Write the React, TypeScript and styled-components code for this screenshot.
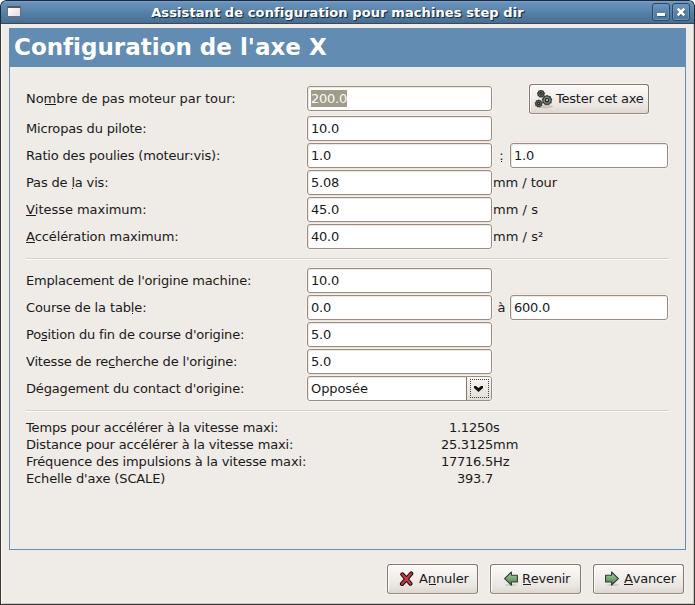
import React from 'react';
import styled, { createGlobalStyle } from 'styled-components';

const GlobalStyle = createGlobalStyle`
  * { box-sizing: border-box; }
  body {
    margin: 0;
    background: #fff;
    color: #1a1a1a;
    font: 13px/17px "DejaVu Sans", sans-serif;
  }
`;

const Window = styled.div`
  display: flex;
  flex-direction: column;
  width: 695px;
  height: 605px;
  overflow: hidden;
  border-radius: 6px 6px 0 0;
  background: #efebe7;
`;

const TitleBar = styled.header`
  display: flex;
  align-items: flex-start;
  flex: none;
  height: 24px;
  padding: 2px 4px 0 6px;
  border: 1px solid #1c2a38;
  border-bottom-color: #364a5e;
  border-radius: 6px 6px 0 0;
  background: linear-gradient(#7da3cb 0, #6790ba 2px, #5f88b0 8px, #5480a8 12px, #4b6f94 21px, #48698b);
`;

const WindowIcon = styled.span`
  width: 14px;
  height: 11px;
  margin-top: 3px;
  border: 1px solid #6f7072;
  border-top: 2px solid #55585c;
  background: linear-gradient(135deg, #fff, #dcdcdc);
`;

const WindowTitle = styled.h1`
  flex: 1;
  margin: 1px 0 0;
  padding-left: 2px;
  color: #fff;
  font-size: 13px;
  line-height: 17px;
  letter-spacing: 0.1px;
  text-align: center;
  text-shadow: 1px 1px 1px #1d2f42, 1px 1px 0 #2c435b;
`;

const WindowControls = styled.div`
  display: flex;
  gap: 2px;
`;

const ControlButton = styled.button`
  display: flex;
  width: 18px;
  height: 18px;
  padding: 0;
  border: 1px solid #30485f;
  border-radius: 3px;
  background: linear-gradient(#6f98c2, #5882aa 50%, #4e7499);
  box-shadow: inset 0 0 0 1px #6a93bc;
`;

const Body = styled.main`
  display: flex;
  flex: 1;
  flex-direction: column;
  padding: 4px 8px 0;
  border: 1px solid #3a3536;
  border-top: 0;
  box-shadow: inset 1px 0 0 #fbf9f7, inset -1px -1px 0 #cdc6c0;
`;

const Page = styled.section`
  width: 677px;
  height: 522px;
  border: 1px solid #648db4;
`;

const PageHeader = styled.h2`
  height: 38px;
  margin: 0;
  padding: 5px 0 0 4px;
  background: #628cb2;
  color: #fff;
  font-size: 23px;
  line-height: 27px;
  letter-spacing: 0.01px;
`;

const Content = styled.div`
  display: flex;
  flex-direction: column;
  padding: 17px 16px 0;
`;

const Group = styled.div`
  display: flex;
  flex-direction: column;
  gap: 2px;
`;

const Row = styled.div<{ $tall?: boolean }>`
  display: grid;
  grid-template-columns: 281px 185px 18px 158px;
  align-items: start;
  height: ${p => (p.$tall ? 30 : 25)}px;
  padding-top: ${p => (p.$tall ? 2 : 0)}px;
`;

const Text = styled.span<{ $track?: number }>`
  white-space: pre;
  letter-spacing: ${p => p.$track ?? 0}px;
`;

const Label = styled(Text)`
  padding-top: 4px;
`;

const Between = styled.span`
  padding: 4px 0 0 1px;
  text-align: center;
`;

const Unit = styled(Text)`
  grid-column: 3 / 5;
  padding: 4px 0 0 1px;
`;

const Mnemonic = styled.span<{ $from?: number; $width: number }>`
  position: relative;
  &::after {
    content: "";
    position: absolute;
    top: 13px;
    left: ${p => p.$from ?? 1}px;
    width: ${p => p.$width}px;
    height: 1px;
    background: #1a1a1a;
  }
`;

const Entry = styled.div`
  display: flex;
  height: 25px;
  padding: 3px;
  border: 1px solid #9b8c7f;
  border-radius: 3px;
  background: #fff;
  box-shadow: inset 1px 1px 0 #eee8e2, 0 0 0 1px #f5f1ee, 0 -1px 0 1px #eae4de;
  letter-spacing: -0.24px;
`;

const Selection = styled.span`
  height: 17px;
  width: 36px;
  background: #a09c8b;
  color: #fbfaf6;
`;

const Combo = styled(Entry)`
  padding-right: 0;
  padding-top: 0;
  padding-bottom: 0;
  justify-content: space-between;
  letter-spacing: -0.08px;
`;

const ComboValue = styled.span`
  padding-top: 3px;
`;

const ComboButton = styled.span`
  display: flex;
  width: 25px;
  height: 23px;
  padding: 2px 2px 2px 3px;
  border-left: 1px solid #857668;
  border-radius: 0 2px 2px 0;
  background: linear-gradient(#f8f6f4, #e3ddd7);
`;

const FocusRing = styled.span`
  display: flex;
  align-items: center;
  justify-content: center;
  width: 19px;
  height: 19px;
  padding: 0 2px 1px 0;
  border: 1px dotted #443f3a;
`;

const Separator = styled.hr`
  width: 643px;
  height: 2px;
  margin: 9px 0 8px;
  border: 0;
  border-top: 1px solid #d9d0cb;
  background: #fffdfc;
`;

const Summary = styled.div`
  display: grid;
  grid-template-columns: 281px 186px 1fr;
  margin-top: -1px;
`;

const Amount = styled(Text)`
  text-align: right;
`;

const PushButton = styled.button<{ $width: number; $inset: number; $gap?: number }>`
  display: flex;
  gap: ${p => p.$gap ?? 4}px;
  width: ${p => p.$width}px;
  height: 30px;
  padding: 5px 0 0 ${p => p.$inset}px;
  border: 1px solid #86776a;
  border-bottom-color: #9a8b7f;
  border-radius: 3px;
  background: linear-gradient(#fbfaf9, #f1eeeb 45%, #e9e5e0 75%, #ded7d0);
  box-shadow: inset 1px 1px 0 #fff, 0 0 0 1px #f6f3f0;
  color: #1a1a1a;
  font: inherit;
  svg { flex: none; }
`;

const TestButton = styled(PushButton)`
  grid-column: 3 / 5;
  margin: -2px 0 0 37px;
`;

const Footer = styled.footer`
  display: flex;
  justify-content: flex-end;
  gap: 12px;
  padding: 14px 2px 0 0;
`;

const spokes = [0, 40, 80, 120, 160, 200, 240, 280, 320];

const Gear = ({ x, y, r }: { x: number; y: number; r: number }) => (
  <g transform={`translate(${x} ${y})`}>
    {spokes.map(a => (
      <rect key={a} x={-0.8} y={-r - 1} width="1.6" height="2" fill="#3c3e3a" transform={`rotate(${a})`} />
    ))}
    <circle r={r} fill="#80847e" stroke="#3a3c38" strokeWidth="1.2" />
    <circle r={r * 0.4} fill="#b9bbb6" stroke="#1c1e1b" strokeWidth="1.1" />
  </g>
);

const GearsIcon = () => (
  <svg width="20" height="20" viewBox="0 0 20 20">
    <ellipse cx="11" cy="16.6" rx="8" ry="1.8" fill="#000" opacity=".13" />
    <Gear x={13} y={10.2} r={4.2} />
    <Gear x={7} y={3.8} r={2.9} />
    <Gear x={4.7} y={13.5} r={2.9} />
  </svg>
);

const CancelIcon = () => (
  <svg width="16" height="16" viewBox="0 0 16 16">
    <g fill="none" strokeLinecap="round" strokeLinejoin="round">
      <path d="M3.4 4.4L11.4 13.6M12.2 3.6L3 14" stroke="#1d0506" strokeWidth="4.2" />
      <path d="M3.4 4.4L11.4 13.6M12.2 3.6L3 14" stroke="#c33a45" strokeWidth="2.3" />
    </g>
  </svg>
);

const ArrowIcon = ({ back }: { back?: boolean }) => (
  <svg width="16" height="16" viewBox="0 0 16 16">
    <defs>
      <linearGradient id={back ? 'leaf-back' : 'leaf-next'} x1="0" y1="0" x2="0" y2="1">
        <stop offset="0" stopColor="#b5d0ae" />
        <stop offset=".5" stopColor="#7ba675" />
        <stop offset="1" stopColor="#437644" />
      </linearGradient>
    </defs>
    <ellipse cx="9" cy="15" rx="6" ry="1" fill="#000" opacity=".12" />
    <path
      transform={back ? 'translate(17 0) scale(-1 1)' : undefined}
      d="M1.6 5.2H7.6V2L14.4 8.6L7.6 15.2V12H1.6Z"
      fill={back ? 'url(#leaf-back)' : 'url(#leaf-next)'}
      stroke="#2d3f32"
      strokeWidth="1.1"
      strokeLinejoin="round"
    />
  </svg>
);

const MinimizeGlyph = () => (
  <svg width="16" height="16" viewBox="0 0 16 16">
    <path d="M5 10H13V13H5Z" fill="#1f3347" opacity=".5" />
    <path d="M4 9H12V12H4Z" fill="#fff" />
  </svg>
);

const CloseGlyph = () => (
  <svg width="16" height="16" viewBox="0 0 16 16" fill="none">
    <path d="M5.7 5.7L11.6 11.6M11.6 5.7L5.7 11.6" stroke="#1f3347" strokeWidth="3" opacity=".5" />
    <path d="M4.7 4.7L11.3 11.3M11.3 4.7L4.7 11.3" stroke="#fff" strokeWidth="2.6" />
  </svg>
);

const totals = [
  { label: 'Temps pour accélérer à la vitesse maxi:', track: -0.15, value: '1.1250', unit: 's' },
  { label: 'Distance pour accélérer à la vitesse maxi:', track: -0.15, value: '25.3125', unit: 'mm' },
  { label: 'Fréquence des impulsions à la vitesse maxi:', track: -0.155, value: '17716.5', unit: 'Hz' },
  { label: "Echelle d'axe (SCALE)", track: -0.13, value: '393.7', unit: '' },
];

export default function App() {
  return (
    <Window>
      <GlobalStyle />
      <TitleBar>
        <WindowIcon />
        <WindowTitle>Assistant de configuration pour machines step dir</WindowTitle>
        <WindowControls>
          <ControlButton aria-label="Réduire"><MinimizeGlyph /></ControlButton>
          <ControlButton aria-label="Fermer"><CloseGlyph /></ControlButton>
        </WindowControls>
      </TitleBar>
      <Body>
        <Page>
          <PageHeader>Configuration de l'axe X</PageHeader>
          <Content>
            <Group>
              <Row $tall>
                <Label $track={-0.055}>No<Mnemonic $width={11}>m</Mnemonic>bre de pas moteur par tour:</Label>
                <Entry><Selection>200.0</Selection></Entry>
                <TestButton $width={120} $inset={4} $gap={2}>
                  <GearsIcon />
                  <Text $track={-0.22}>Tester cet axe</Text>
                </TestButton>
              </Row>
              <Row>
                <Label $track={-0.17}>Micropas du pilote:</Label>
                <Entry>10.0</Entry>
              </Row>
              <Row>
                <Label $track={-0.165}>Ratio des poulies (moteur:vis):</Label>
                <Entry>1.0</Entry>
                <Between><Mnemonic $from={2} $width={1}>:</Mnemonic></Between>
                <Entry>1.0</Entry>
              </Row>
              <Row>
                <Label $track={-0.16}>Pas de <Mnemonic $width={1}>l</Mnemonic>a vis:</Label>
                <Entry>5.08</Entry>
                <Unit $track={-0.067}>mm / tour</Unit>
              </Row>
              <Row>
                <Label $track={-0.04}><Mnemonic $from={0} $width={10}>V</Mnemonic>itesse maximum:</Label>
                <Entry>45.0</Entry>
                <Unit $track={0.04}>mm / s</Unit>
              </Row>
              <Row>
                <Label $track={-0.12}><Mnemonic $from={0} $width={9}>A</Mnemonic>ccélération maximum:</Label>
                <Entry>40.0</Entry>
                <Unit $track={0.04}>mm / s²</Unit>
              </Row>
            </Group>
            <Separator />
            <Group>
              <Row>
                <Label $track={-0.175}>Emplacement de l'origine machine:</Label>
                <Entry>10.0</Entry>
              </Row>
              <Row>
                <Label $track={-0.13}>Course de la tab<Mnemonic $width={1}>l</Mnemonic>e:</Label>
                <Entry>0.0</Entry>
                <Between>à</Between>
                <Entry>600.0</Entry>
              </Row>
              <Row>
                <Label $track={-0.195}>Po<Mnemonic $from={0} $width={6}>s</Mnemonic>ition du fin de course d'origine:</Label>
                <Entry>5.0</Entry>
              </Row>
              <Row>
                <Label $track={-0.18}>Vitesse de re<Mnemonic $width={6}>c</Mnemonic>herche de l'origine:</Label>
                <Entry>5.0</Entry>
              </Row>
              <Row>
                <Label $track={-0.155}>Dégagement du contact d'origine:</Label>
                <Combo>
                  <ComboValue>Opposée</ComboValue>
                  <ComboButton>
                    <FocusRing>
                      <svg width="9" height="7" viewBox="0 0 9 7">
                        <path d="M0 1H2L4.5 3L7 1H9V3L4.5 7L0 3Z" fill="#111" />
                      </svg>
                    </FocusRing>
                  </ComboButton>
                </Combo>
              </Row>
            </Group>
            <Separator />
            <Summary>
              {totals.map(t => (
                <React.Fragment key={t.label}>
                  <Text $track={t.track}>{t.label}</Text>
                  <Amount $track={-0.24}>{t.value}</Amount>
                  <Text>{t.unit}</Text>
                </React.Fragment>
              ))}
            </Summary>
          </Content>
        </Page>
        <Footer>
          <PushButton $width={91} $inset={11}>
            <CancelIcon />
            <Text $track={-0.12}>A<Mnemonic $width={7}>n</Mnemonic>nuler</Text>
          </PushButton>
          <PushButton $width={91} $inset={11}>
            <ArrowIcon back />
            <Text $track={-0.262}><Mnemonic $width={8}>R</Mnemonic>evenir</Text>
          </PushButton>
          <PushButton $width={91} $inset={10}>
            <ArrowIcon />
            <Text $track={-0.217}><Mnemonic $from={0} $width={9}>A</Mnemonic>vancer</Text>
          </PushButton>
        </Footer>
      </Body>
    </Window>
  );
}
